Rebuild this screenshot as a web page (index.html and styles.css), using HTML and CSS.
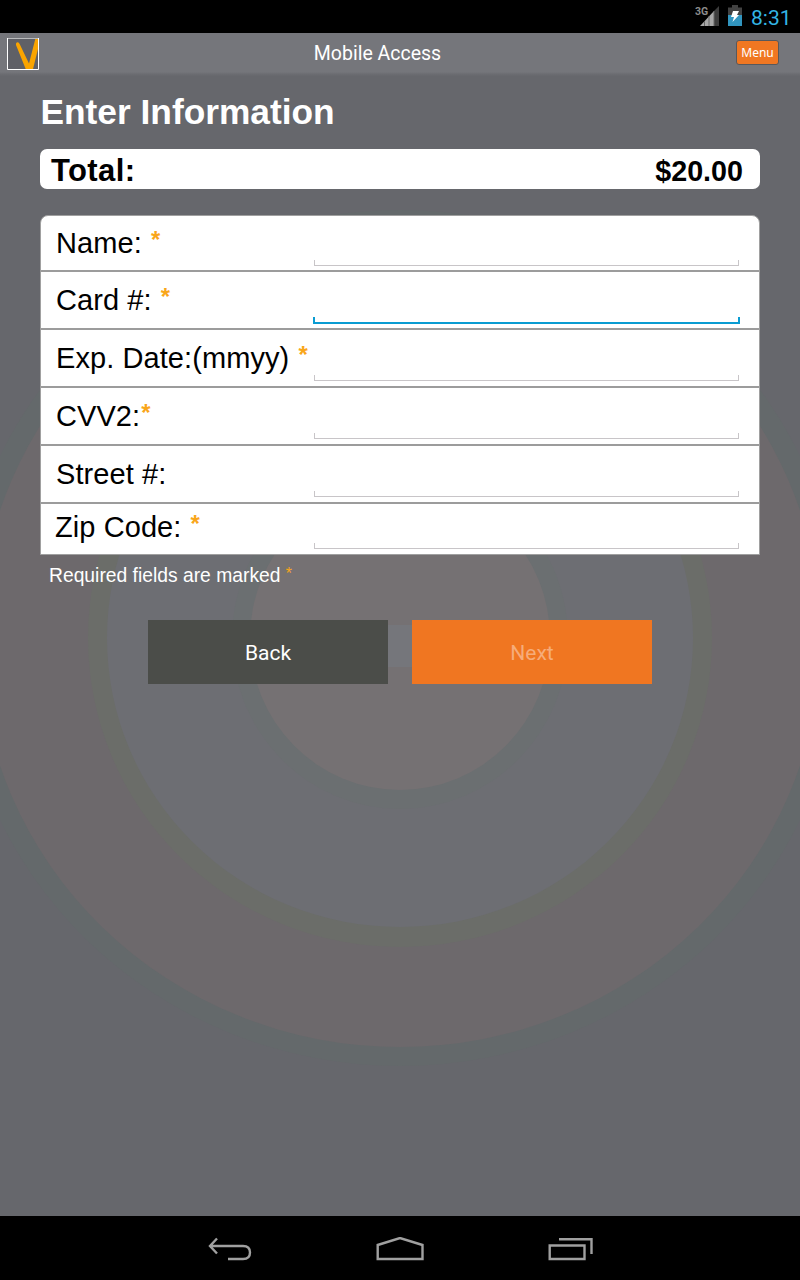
FILE: index.html
```html
<!DOCTYPE html>
<html lang="en">
<head>
<meta charset="utf-8">
<title>Mobile Access</title>
<link rel="stylesheet" href="styles.css">
</head>
<body>
<div class="status">
  <svg class="signal" width="26" height="24" viewBox="0 0 26 24">
    <text class="net" x="1" y="9.500">3G</text>
    <path d="M25 1v20H20V6z" fill="#3c3c3c"/>
    <path d="M20 6V21H6z" fill="#a8a8a8"/>
    <path d="M10.500 16v5M15 11v10M20 6v15" stroke="#666"/>
  </svg>
  <svg class="battery" width="14" height="22" viewBox="0 0 14 22">
    <path d="M4 0h6v2.500H4zM0 2.500h14V10H0z" fill="#424242"/>
    <path d="M0 10h14v11H0z" fill="#3195bf"/>
    <path d="M5 6h6L9 10h2L4.500 17 6 12H3z" fill="#fff"/>
  </svg>
  <span class="clock">8:31</span>
</div>
<header class="bar">
  <svg class="logo" width="32" height="32" viewBox="0 0 32 32">
    <path d="M.5.5h31v31H.5z" fill="#5f6066"/>
    <path d="M9 5.500Q10.500 3 12.500 5.800L22 25.500 28.300 1H31V11L26 31H18.700L9 7z" fill="#f9a400"/>
    <path d="M0 .5h32" stroke="#b9babc"/>
    <path d="M.5 0v31.500h31V0" fill="none" stroke="#fff"/>
  </svg>
  <span class="title">Mobile Access</span>
  <button class="menu">Menu</button>
</header>
<main class="screen">
  <svg class="rings" width="800" height="1140" viewBox="0 76 800 1140">
    <ellipse cx="400" cy="638" rx="442" ry="428" fill="#64696b"/>
    <ellipse cx="400" cy="638" rx="421" ry="409" fill="#6d696c"/>
    <ellipse cx="400" cy="638" rx="312" ry="309" fill="#6b6d69"/>
    <ellipse cx="400" cy="638" rx="293" ry="289" fill="#6d6e73"/>
    <ellipse cx="400" cy="638" rx="168" ry="171" fill="#6b6f71"/>
    <ellipse cx="400" cy="638" rx="150" ry="152" fill="#757173"/>
    <path d="M384 625h32v42H384z" fill="#75767b"/>
  </svg>
  <h1 class="heading">Enter Information</h1>
  <div class="total"><span class="total-label">Total:</span><span class="amount">$20.00</span></div>
  <form class="card">
    <label class="row first"><span class="label">Name: <b class="star">*</b></span><span class="field"></span></label>
    <label class="row"><span class="label">Card #: <b class="star">*</b></span><span class="field active"></span></label>
    <label class="row"><span class="label">Exp. Date:(mmyy) <b class="star">*</b></span><span class="field"></span></label>
    <label class="row"><span class="label">CVV2:<b class="star">*</b></span><span class="field"></span></label>
    <label class="row"><span class="label">Street #:</span><span class="field"></span></label>
    <label class="row last"><span class="label">Zip Code: <b class="star">*</b></span><span class="field"></span></label>
  </form>
  <p class="note">Required fields are marked <b class="star">*</b></p>
  <div class="actions">
    <button class="btn back">Back</button>
    <button class="btn next">Next</button>
  </div>
</main>
<nav class="nav">
  <svg width="44" height="26" viewBox="0 0 44 26" fill="none" stroke="#a0a0a0" stroke-width="2.400">
    <path d="M9 1.500L2 9l7 7.500M2 9H35Q42 9 42 15.500T35 22H20"/>
  </svg>
  <svg width="50" height="26" viewBox="0 0 50 26" fill="none" stroke="#a0a0a0" stroke-width="2.400">
    <path d="M2.700 22V8L25 1 47.500 8V22z"/>
  </svg>
  <svg width="46" height="26" viewBox="0 0 46 26" fill="none" stroke="#a0a0a0" stroke-width="2.400">
    <path d="M1.700 8.500H36.500V22H1.700zM11 2.200H43.500V17"/>
  </svg>
</nav>
</body>
</html>
```
FILE: styles.css
```css
* { box-sizing: border-box; }
body {
  margin: 0;
  width: 800px;
  height: 1280px;
  display: flex;
  flex-direction: column;
  overflow: hidden;
  background: #000;
  font-family: "Liberation Sans", Arial, sans-serif;
}
button { border: 0; padding: 0; font-family: Roboto, sans-serif; }
svg { display: block; flex: none; }

.status {
  height: 33px;
  flex: none;
  display: flex;
  justify-content: flex-end;
  padding: 5px 9px 0 0;
}
.signal { margin-right: 8px; }
.net { font: 700 10.500px Roboto, sans-serif; fill: #8c8c8c; }
.battery { margin-right: 9px; }
.clock {
  width: 40px;
  font: 400 21px/26px Roboto, sans-serif;
  color: #33b5e5;
  white-space: nowrap;
}

.bar {
  height: 43px;
  flex: none;
  display: grid;
  grid-template-columns: 50px 1fr 50px;
  padding: 0 21px 0 7px;
  background: linear-gradient(#75767b 0 39px, #6c6d72 41px, #67686d 43px);
}
.logo { margin-top: 5px; }
.title {
  font: 400 19.500px/42px Roboto, sans-serif;
  color: #fff;
  text-align: center;
  padding-right: 31px;
}
.menu {
  justify-self: end;
  margin-top: 7px;
  width: 43px;
  height: 25px;
  border: 1px solid #57585c;
  border-radius: 3px;
  background: #f07722;
  color: #fff;
  font: 400 12px/23px "Noto Sans", sans-serif;
}

.screen {
  position: relative;
  height: 1140px;
  flex: none;
  padding: 0 40px;
  background: #66676c;
}
.rings { position: absolute; left: 0; top: 0; }
.screen > :not(.rings) { position: relative; }
.heading {
  margin: 0;
  height: 73px;
  padding: 15px 0 0 .5px;
  font-size: 35.300px;
  line-height: 42px;
  color: #fff;
}
.total {
  height: 40px;
  display: flex;
  justify-content: space-between;
  padding: 0 17px 0 11px;
  border-radius: 7px;
  background: #fff;
  font-weight: bold;
  line-height: 43px;
}
.total-label { font-size: 31px; letter-spacing: .4px; }
.amount { font-size: 28.700px; line-height: 44px; }

.card {
  margin-top: 26px;
  width: 720px;
  border: 1px solid #a0a0a0;
  border-radius: 8px 8px 0 0;
  background: #fff;
  overflow: hidden;
}
.row {
  height: 58px;
  display: grid;
  grid-template-columns: 273px 426px;
  border-bottom: 2px solid #9c9c9c;
}
.row.first { height: 56px; }
.row.last { height: 50px; border: 0; }
.label {
  padding-left: 15px;
  font-size: 29px;
  line-height: 56px;
  letter-spacing: .08px;
  white-space: pre;
  color: #000;
}
.first .label { line-height: 55px; }
.last .label { line-height: 47px; padding-left: 14px; }
.star {
  margin-left: 1px;
  font-size: .82em;
  line-height: 1;
  vertical-align: .2em;
  color: #f9a61a;
}
.field {
  align-self: end;
  height: 6px;
  margin: 0 1px 5px 0;
  border: 1px solid #c8c5c8;
  border-top: 0;
}
.field.active {
  height: 7px;
  margin: 0 0 4px -1px;
  border: 2px solid #0a9cd2;
  border-top: 0;
}
.note {
  margin: 0;
  height: 65px;
  padding: 10px 0 0 9px;
  font-size: 19.300px;
  line-height: 22px;
  color: #fff;
}
.note .star { margin: 0; font-weight: 400; }
.actions { display: flex; justify-content: center; gap: 24px; }
.btn { width: 240px; height: 64px; padding-top: 2px; font-size: 21px; color: #fff; }
.back { background: #4b4d49; }
.next { background: #f07621; color: #f6ac7a; }

.nav {
  height: 64px;
  display: flex;
  justify-content: center;
  gap: 123px;
  padding: 21px 0 0 2px;
}
```
